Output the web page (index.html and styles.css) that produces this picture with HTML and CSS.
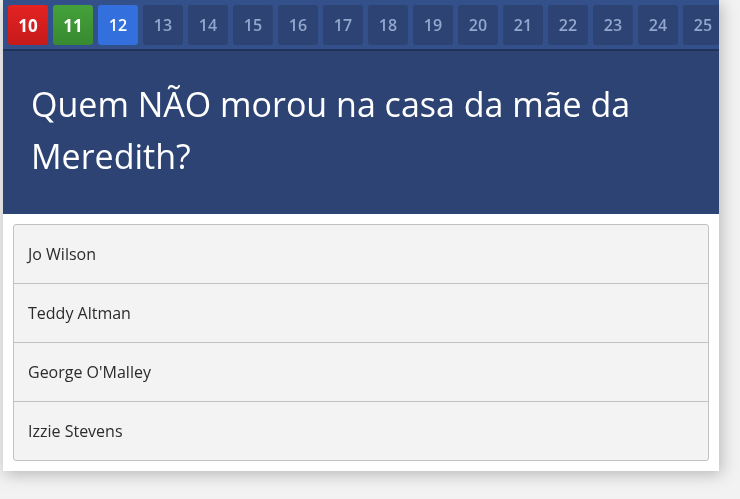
FILE: index.html
```html
<!DOCTYPE html>
<html lang="pt">
<head>
<meta charset="utf-8">
<link rel="stylesheet" href="styles.css">
</head>
<body>
<div class="card">
  <nav class="nav">
    <span class="num wrong">10</span>
    <span class="num right">11</span>
    <span class="num current">12</span>
    <span class="num">13</span>
    <span class="num">14</span>
    <span class="num">15</span>
    <span class="num">16</span>
    <span class="num">17</span>
    <span class="num">18</span>
    <span class="num">19</span>
    <span class="num">20</span>
    <span class="num">21</span>
    <span class="num">22</span>
    <span class="num">23</span>
    <span class="num">24</span>
    <span class="num">25</span>
  </nav>
  <h1 class="question">Quem NÃO morou na casa da mãe da Meredith?</h1>
  <div class="options">
    <div class="option">Jo Wilson</div>
    <div class="option">Teddy Altman</div>
    <div class="option">George O'Malley</div>
    <div class="option">Izzie Stevens</div>
  </div>
</div>
</body>
</html>
```
FILE: styles.css
```css
html {
  margin: 0;
  padding: 0;
  background: #f2f2f2;
}
body {
  margin: 0;
  padding: 0 21px 30px 3px;
  font-family: "Open Sans", "Noto Sans", sans-serif;
}
.card {
  background: #fff;
  filter: drop-shadow(2px 3px 8px rgba(0,0,0,0.25));
  padding-bottom: 10px;
}
.nav {
  display: flex;
  gap: 5px;
  padding: 5px 5px 4px 5px;
  background: #34508a;
  border-bottom: 2px solid #1f3259;
  overflow: hidden;
}
.num {
  flex: 0 0 40px;
  height: 40px;
  border-radius: 3px;
  background: #2d4373;
  color: #93a6cd;
  font-weight: 600;
  font-size: 16px;
  display: flex;
  align-items: center;
  justify-content: center;
}
.num.wrong { background: linear-gradient(#e42222, #c61a1a); color: #fff; font-size: 17px; font-weight: 700; }
.num.right { background: linear-gradient(#44a13a, #388a30); color: #fff; font-size: 17px; font-weight: 700; }
.num.current { background: #3470dd; color: #fff; }
.question {
  margin: 0;
  background: #2d4373;
  color: #fff;
  font-weight: 400;
  font-size: 34px;
  line-height: 52px;
  padding: 27px 28px 32px 28px;
}
.options {
  margin: 10px 10px 0 10px;
  border: 1px solid #c2c2c2;
  border-radius: 3px;
  background: #f3f3f3;
}
.option {
  height: 58px;
  display: flex;
  align-items: center;
  padding-left: 14px;
  font-size: 16px;
  color: #2b2b2b;
  border-top: 1px solid #c2c2c2;
}
.option:first-child { border-top: none; }
```
